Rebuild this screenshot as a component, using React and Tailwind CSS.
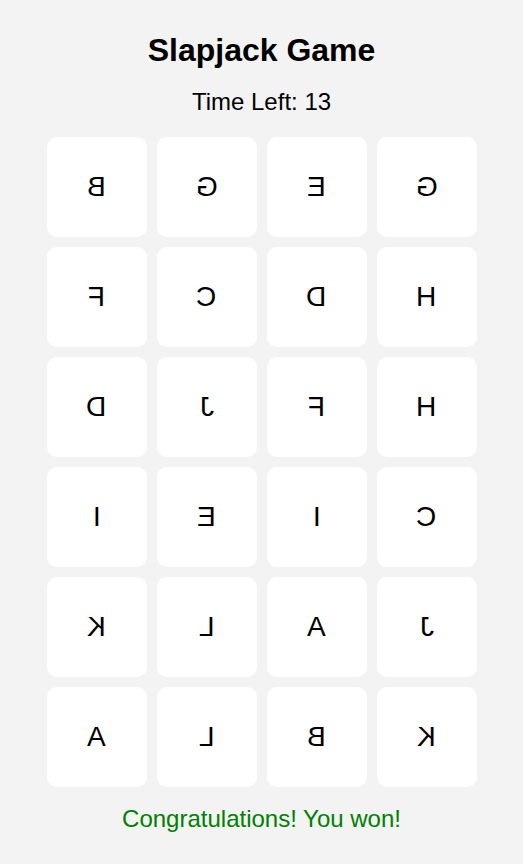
const cards = [
  'B', 'G', 'E', 'G',
  'F', 'C', 'D', 'H',
  'D', 'J', 'F', 'H',
  'I', 'E', 'I', 'C',
  'K', 'L', 'A', 'J',
  'A', 'L', 'B', 'K',
]

function Card({ value }) {
  return (
    <div className="flex h-[100px] w-[100px] items-center justify-center rounded-[10px] bg-white">
      <span className="inline-block -scale-x-100 text-[28px] leading-none text-black">{value}</span>
    </div>
  )
}

export default function App() {
  return (
    <div className="min-h-[864px] bg-[#f3f3f3] pt-[32px] font-['Liberation_Sans',Arial,sans-serif] text-black">
      <div className="flex flex-col items-center">
        <h1 className="text-[32px] font-bold leading-[36px]">Slapjack Game</h1>
        <p className="mt-[20px] text-[24px] leading-[28px]">Time Left: 13</p>
        <div className="mt-[21px] grid grid-cols-[repeat(4,100px)] gap-[10px]">
          {cards.map((c, i) => (
            <Card key={i} value={c} />
          ))}
        </div>
        <p className="mt-[18px] text-[24px] leading-[28px] text-[#008000]">Congratulations! You won!</p>
      </div>
    </div>
  )
}
